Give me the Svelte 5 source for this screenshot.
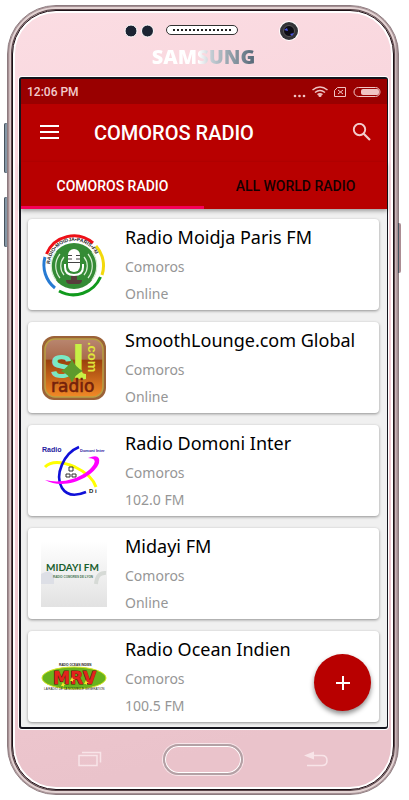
<script lang="ts">
  type Station = { name: string; country: string; band: string; logo: string };

  const stations: Station[] = [
    { name: "Radio Moidja Paris FM", country: "Comoros", band: "Online", logo: "moidja" },
    { name: "SmoothLounge.com Global", country: "Comoros", band: "Online", logo: "smooth" },
    { name: "Radio Domoni Inter", country: "Comoros", band: "102.0 FM", logo: "domoni" },
    { name: "Midayi FM", country: "Comoros", band: "Online", logo: "midayi" },
    { name: "Radio Ocean Indien", country: "Comoros", band: "100.5 FM", logo: "mrv" },
  ];

  const tabs = ["COMOROS RADIO", "ALL WORLD RADIO"];
  let active = $state(0);
</script>

<div class="phone">
  <span class="side-key side-key--up"></span>
  <span class="side-key side-key--down"></span>
  <span class="side-key side-key--power"></span>

  <div class="shell">
    <div class="shell__top">
      <svg class="sensors" viewBox="0 0 180 24" width="180" height="24" aria-hidden="true">
        <g fill="#1c2433" stroke="#fff">
          <circle cx="9" cy="13" r="6" />
          <circle cx="25.500" cy="13" r="6" />
        </g>
        <rect x="44.500" y="7.500" width="71" height="9" rx="4.500" fill="#fff" stroke="#333" />
        <path d="M51 12h60" stroke="#222" stroke-width="2" stroke-dasharray="2 2" />
        <circle cx="167" cy="13" r="10" fill="#fff" />
        <circle cx="167" cy="13" r="9" fill="#333338" />
        <circle cx="167" cy="13" r="5.500" fill="#0c0c14" stroke="#555" />
        <path d="M162 12l3-2 1 3zM168 16l4-1-2 3z" fill="#4a55e8" />
      </svg>
      <span class="brand">SAMSUNG</span>
    </div>

    <main class="screen">
      <div class="status">
        <span>12:06 PM</span>
        <svg viewBox="0 0 88 14" width="88" height="14" aria-hidden="true">
          <g fill="#f0c4c4">
            <circle cx="2" cy="11" r="1.300" />
            <circle cx="6.500" cy="11" r="1.300" />
            <circle cx="11" cy="11" r="1.300" />
            <circle cx="27" cy="10.500" r="1.600" />
            <rect x="68" y="4" width="18" height="6" rx="2" />
          </g>
          <g fill="none" stroke="#f0c4c4">
            <path d="M19.500 5q7.500-6 15 0M22 7.500q5-4 10 0M24.500 9.700q2.500-2 5 0" stroke-width="1.500" />
            <path d="M44.500 2.500h8v9h-11v-6zM45 5l5 4M50 5l-5 4" />
            <rect x="61" y="2.500" width="26" height="9" rx="4.500" />
          </g>
        </svg>
      </div>

      <header class="appbar">
        <button class="icon-btn" aria-label="Open menu">
          <svg viewBox="0 0 20 16" width="20" height="16"><path d="M1 1h19M1 7h19M1 13h19" stroke="#fff" stroke-width="2" /></svg>
        </button>
        <h1>COMOROS RADIO</h1>
        <button class="icon-btn" aria-label="Search">
          <svg viewBox="0 0 20 20" width="20" height="20" fill="none" stroke="#f3cccc">
            <circle cx="7.500" cy="6.500" r="5.700" stroke-width="1.900" />
            <path d="M11.500 10.500l6.500 6.500" stroke-width="2.200" />
          </svg>
        </button>
      </header>

      <nav class="tabs">
        {#each tabs as tab, i}
          <button class="tab" class:tab--active={active === i} onclick={() => (active = i)}>{tab}</button>
        {/each}
      </nav>

      <ul class="stations">
        {#each stations as station}
          <li class="card">
            <svg class="card__logo" viewBox="0 0 66 66" width="66" height="66" aria-hidden="true">
              {#if station.logo === "moidja"}
                <circle cx="33" cy="34" r="23" fill="#348b35" />
                <g fill="none" stroke="#d9efd5" stroke-width="1.200">
                  <path d="M23 25a14 14 0 0 0 0 18M43 25a14 14 0 0 1 0 18M19 22a19 19 0 0 0 0 24M47 22a19 19 0 0 1 0 24M15 20a23 23 0 0 0 0 28M51 20a23 23 0 0 1 0 28" />
                </g>
                <g fill="none" stroke-width="3">
                  <path d="M5.500 22A29.500 29.500 0 0 1 52 11" stroke="#ee1018" />
                  <path d="M55 14A29.500 29.500 0 0 1 61 43" stroke="#f3d90c" />
                  <path d="M59.500 45A29.500 29.500 0 0 1 18 59" stroke="#119a1d" />
                  <path d="M14 56A29.500 29.500 0 0 1 4 25" stroke="#277bd3" />
                </g>
                <path id="moidja-arc" d="M9 32A24 24 0 0 1 57 34" fill="none" />
                <text class="logo-sans" font-size="5" font-weight="700" fill="#222"><textPath href="#moidja-arc">RADIO•MOIDJA•PARIS•FM</textPath></text>
                <rect x="27" y="17" width="12" height="23" rx="6" fill="#fff" />
                <path d="M27 23.500h4M35 23.500h4M27 27h4M35 27h4M27 30.500h12" stroke="#444" />
                <path d="M24 32v3q0 8 9 8t9-8v-3" fill="none" stroke="#fff" stroke-width="2" />
                <path d="M30 44h6v4h5q0 4-4 4h-8q-4 0-4-4h5z" fill="#583d3c" />
              {:else if station.logo === "smooth"}
                <defs>
                  <linearGradient id="smooth-bg" x2="0" y2="1">
                    <stop offset="0" stop-color="#b98670" />
                    <stop offset=".35" stop-color="#a86a4b" />
                    <stop offset=".36" stop-color="#99400d" />
                    <stop offset="1" stop-color="#f28a27" />
                  </linearGradient>
                </defs>
                <rect x="1" y="1" width="64" height="64" rx="12" fill="#9b6238" />
                <rect x="4" y="4" width="58" height="58" rx="10" fill="url(#smooth-bg)" stroke="#b9a044" stroke-width="1.500" />
                <text class="logo-sans" x="9" y="43" font-size="42" font-weight="700" fill="#7ae8c4">s</text>
                <text class="logo-sans" x="31" y="43" font-size="46" font-weight="700" fill="#c8f045">l</text>
                <path d="M34 36h7q0 3 4 3v5q-9 1-11-3z" fill="#c8f045" />
                <path d="M31 24q3 8 11 12-8 3-11 12-3-9-11-12 8-4 11-12z" fill="#5d9a2d" />
                <text class="logo-sans" transform="translate(47 7) rotate(90)" font-size="13" font-weight="700" fill="#dfe43a">.com</text>
                <text class="logo-dejavu" x="10" y="57" font-size="17" fill="#74210b" stroke="#74210b" stroke-width=".6">radio</text>
              {:else if station.logo === "domoni"}
                <g fill="none">
                  <path d="M4 29q9-9 30 0 17 8 21 20" stroke="#ff0" stroke-width="3" />
                  <path d="M38 9C23 15 13 37 21 50q7 11 24 4" stroke="#1010d8" stroke-width="2.600" />
                </g>
                <path d="M4 42C24 47 46 38 53 26q3-6-6-6 13-5 11 5C53 39 24 53 4 42z" fill="#f0f" />
                <path d="M28 29h4v4h-4zM25 36h4v3h-4zM31 36h4v3h-4z" fill="#fff" stroke="#333" />
                <text class="logo-sans" x="1" y="14" font-size="7" font-weight="700" fill="#2520a0">Radio</text>
                <text class="logo-sans" x="39" y="14" font-size="4" font-weight="700" fill="#2520a0">Domoni Inter</text>
                <text class="logo-sans" x="48" y="55" font-size="6" font-weight="700" fill="#222">D i</text>
              {:else if station.logo === "midayi"}
                <defs>
                  <linearGradient id="midayi-bg" x2="0" y2="1">
                    <stop offset="0" stop-color="#fff" />
                    <stop offset="1" stop-color="#e2e2e2" />
                  </linearGradient>
                </defs>
                <rect width="66" height="66" fill="url(#midayi-bg)" />
                <path d="M0 33q9-6 13 2v8H0z" fill="#dddfe6" />
                <path d="M65 32q-9-1-10 11" fill="none" stroke="#d6dad6" stroke-width="4" />
                <text class="logo-lato" x="5" y="30" font-size="10" font-weight="700" fill="#18602e">MIDAYI FM</text>
                <text class="logo-sans" x="12" y="37" font-size="3" font-weight="700" fill="#44744f">RADIO COMORES DE LYON</text>
              {:else}
                <ellipse cx="33" cy="34" rx="32" ry="11" fill="#68b31d" stroke="#d7e51f" />
                <text class="logo-sans" x="18" y="22" font-size="3" font-weight="700" fill="#222">RADIO OCEAN INDIEN</text>
                <text class="mrv" x="12" y="40" font-size="17" font-weight="700">MRV</text>
                <path d="M22 38l1 2 2 0-2 1 0 2-1-1-2 0 1-2zM31 33l1 2 2 0-2 1 0 2-1-1-2 0 1-2zM45 36l1 2 2 0-2 1 0 2-1-1-2 0 1-2z" fill="#f6e62a" />
                <text class="logo-sans" x="3" y="46" font-size="3" fill="#222">LA RADIO DE LA NOUVELLE GENERATION</text>
              {/if}
            </svg>
            <div class="card__text">
              <h2>{station.name}</h2>
              <p>{station.country}</p>
              <p>{station.band}</p>
            </div>
          </li>
        {/each}
      </ul>

      <button class="fab" aria-label="Add station">
        <svg viewBox="0 0 16 16" width="16" height="16"><path d="M8 1v14M1 8h14" stroke="#fff" stroke-width="2" /></svg>
      </button>
    </main>

    <div class="keys">
      <button class="key" aria-label="Recent apps">
        <svg viewBox="0 0 24 16" width="24" height="16" fill="none" stroke="#f8e4e8" stroke-width="1.500">
          <path d="M1 4.500h18v10H1zM4 1.500h18.500v10" />
        </svg>
      </button>
      <button class="home" aria-label="Home"></button>
      <button class="key" aria-label="Back">
        <svg viewBox="0 0 24 16" width="24" height="16">
          <path d="M0 4.500l10-4v8z" fill="#f8e4e8" />
          <path d="M8 4.500h10q5 0 5 5t-5 5H3" fill="none" stroke="#f8e4e8" stroke-width="1.500" />
        </svg>
      </button>
    </div>
  </div>
</div>

<style>
  :global(body) {
    background: #fff;
  }

  button {
    border: 0;
    padding: 0;
    background: none;
    font: inherit;
    color: inherit;
    cursor: pointer;
  }

  .phone {
    position: relative;
    margin: 5px 10px 5px 7px;
    padding: 4px;
    border: 1px solid #8d7b7f;
    border-radius: 49px;
    background: linear-gradient(90deg, #b39da0, #e3d3d3 3px, #e3d3d3 calc(100% - 4px), #9b858a);
    box-shadow: inset 0 0 0 1px #a58f93;
    font-family: Roboto, sans-serif;
  }

  .side-key {
    position: absolute;
    left: -4px;
    width: 3px;
    height: 50px;
    border-radius: 2px 0 0 2px;
    background: #8597a6;
    box-shadow: inset 1px 0 #46525d;
  }

  .side-key--up {
    top: 117px;
  }

  .side-key--down {
    top: 191px;
  }

  .side-key--power {
    left: auto;
    right: -3px;
    top: 217px;
    border-radius: 0 2px 2px 0;
    background: #ab8c93;
  }

  .shell {
    padding: 0 5px 0 6px;
    border: 1px solid #1b1116;
    border-radius: 44px;
    background: linear-gradient(165deg, #fbdde3, #f7d0d8 40%, #eac3cb 90%);
    box-shadow: inset 0 0 0 2px #fff, 0 0 0 1px #5b4449;
  }

  .shell__top {
    display: flex;
    flex-direction: column;
    align-items: center;
    height: 66px;
    padding-top: 7px;
    box-sizing: border-box;
  }

  .sensors {
    margin-left: 16px;
  }

  .brand {
    font-family: "Open Sans", sans-serif;
    font-size: 20px;
    font-weight: 800;
    line-height: 30px;
    color: transparent;
    background: linear-gradient(90deg, #fff 45%, #c2ccd3 58%, #546776);
    background-clip: text;
  }

  .screen {
    position: relative;
    border: 2px solid #14141c;
    border-right-width: 1px;
    border-radius: 3px;
    background: #f0f0f0;
    box-shadow: 0 0 0 1px #fff;
  }

  .status {
    display: flex;
    align-items: center;
    justify-content: space-between;
    height: 25px;
    padding: 0 6px;
    background: #990000;
    color: #f3cccc;
    font-size: 12px;
    font-weight: 500;
  }

  .appbar {
    display: flex;
    align-items: center;
    height: 58px;
    padding: 0 15px 0 18px;
    background: #b80000;
    color: #fff;
  }

  .appbar h1 {
    flex: 1;
    margin: 0 0 0 35px;
    font-size: 20px;
    font-weight: 500;
  }

  .icon-btn {
    display: flex;
  }

  .tabs {
    display: grid;
    grid-template-columns: 1fr 1fr;
    background: #b80000;
    box-shadow: 0 2px 4px rgba(0, 0, 0, 0.35);
  }

  .tab {
    height: 47px;
    border-top: 3px solid transparent;
    border-bottom: 3px solid transparent;
    box-sizing: border-box;
    font-size: 14px;
    font-weight: 500;
    color: #140000;
  }

  .tab--active {
    border-bottom-color: #f50057;
    color: #fff;
  }

  .stations {
    display: flex;
    flex-direction: column;
    gap: 12px;
    margin: 0;
    padding: 10px 8px 5px 7px;
    list-style: none;
  }

  .card {
    display: flex;
    align-items: center;
    gap: 18px;
    padding: 3px 14px 3px 13px;
    border-radius: 4px;
    background: #fff;
    box-shadow: 0 1px 3px rgba(0, 0, 0, 0.4);
    font-family: "Noto Sans", sans-serif;
  }

  .card__logo {
    flex: none;
  }

  .card__text {
    min-width: 0;
  }

  .card h2 {
    margin: 0 0 1px;
    font-size: 18px;
    font-weight: 400;
    line-height: 30px;
    color: #000;
    white-space: nowrap;
  }

  .card p {
    margin: 0;
    font-size: 14px;
    line-height: 27px;
    color: #969696;
  }

  .logo-sans {
    font-family: "Liberation Sans", sans-serif;
  }

  .logo-dejavu {
    font-family: "DejaVu Sans", sans-serif;
  }

  .logo-lato {
    font-family: Lato, sans-serif;
  }

  .mrv {
    font-family: "DejaVu Sans", sans-serif;
    fill: #e2231d;
    stroke: #5a1408;
    stroke-width: 1;
    paint-order: stroke;
  }

  .fab {
    position: absolute;
    right: 16px;
    bottom: 16px;
    display: grid;
    place-items: center;
    width: 57px;
    height: 57px;
    border-radius: 50%;
    background: #b80000;
    box-shadow: 0 3px 5px rgba(0, 0, 0, 0.45);
  }

  .keys {
    display: flex;
    align-items: center;
    justify-content: space-between;
    height: 60px;
    padding: 0 60px 0 59px;
  }

  .key {
    display: flex;
  }

  .home {
    width: 80px;
    height: 31px;
    border: 2px solid #b3a1a5;
    border-radius: 16px;
    box-shadow: inset 0 0 0 1px #fff, 0 0 0 1px #f8e6ea;
  }
</style>
